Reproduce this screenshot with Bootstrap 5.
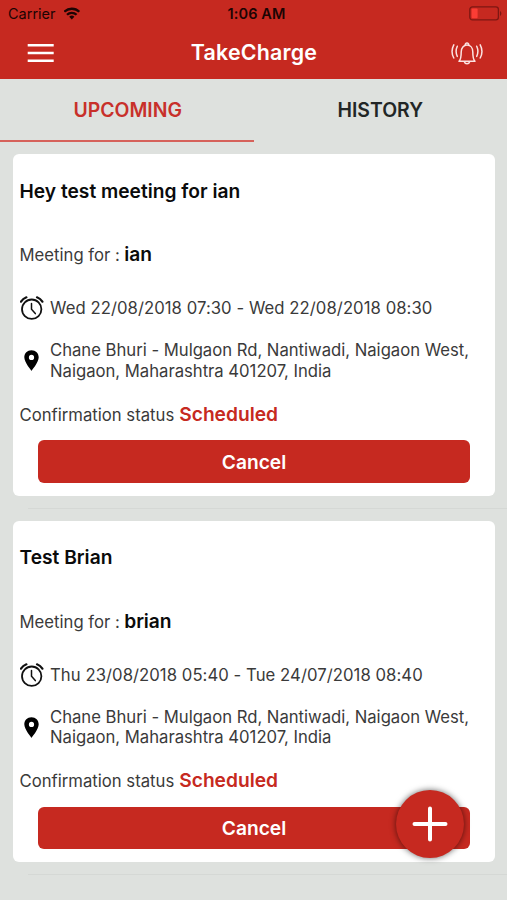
<!DOCTYPE html>
<html lang="en">
<head>
<meta charset="utf-8">
<meta name="viewport" content="width=device-width, initial-scale=1">
<title>TakeCharge</title>
<link href="https://cdn.jsdelivr.net/npm/bootstrap@5.3.0/dist/css/bootstrap.min.css" rel="stylesheet">
<style>
  body { font-family: Inter, "Liberation Sans", sans-serif; background: #dee1de; color: #3a3a3a; height: 900px; }
  svg { display: block; flex: none; }
  .brand-red { background: #c62920; }
  .status-bar { height: 27px; padding: 0 5px 0 8px; font-size: 14.5px; color: #1c0403; }
  .status-bar .side { flex: 1 1 0; }
  .clock { font-weight: 600; font-size: 14.5px; letter-spacing: .1px; white-space: nowrap; padding-left: 3px; }
  .title-bar { height: 52px; padding: 0 23px 1px 27px; }
  .title-bar h1 { font-size: 21.4px; font-weight: 600; letter-spacing: .2px; padding-left: 4px; }
  .tab-link { height: 63px; font-size: 19.4px; font-weight: 600; color: #222626; border-bottom: 2px solid transparent; padding-top: 2px; text-decoration: none; }
  .tab-link.active { color: #c8302a; border-bottom-color: #d6625b; padding-left: 2px; }
  .meeting { height: 341.5px; margin: 0 12px 0 13px; border: 0; border-radius: 6px; padding: 0 7px; font-size: 16.7px; line-height: 20.5px; }
  .meeting h2 { font-size: 19.2px; line-height: 24px; font-weight: 600; color: #0b0b0b; margin: 24.5px 0 0 -.5px; }
  .who { height: 24px; margin: 41.5px 0 0 -.5px; }
  .when { height: 26px; margin-top: 27.3px; letter-spacing: .05px; }
  .where { height: 41px; margin-top: 19.200px; letter-spacing: -.02px; }
  .icon-slot { width: 30px; flex: none; }
  .state { height: 24px; margin: 22.500px 0 0 -.5px; }
  .who b, .state b { margin-left: 5px; font-size: 19.2px; font-weight: 600; color: #0b0b0b; }
  .who b { margin-left: 4.500px; letter-spacing: -.1px; }
  .state b { color: #c62920; }
  .btn-cancel { height: 42.5px; margin: 12.5px 18px 0; border: 0; border-radius: 6px; padding: 1px 0 0; color: #fff; font-size: 19.2px; font-weight: 600; }
  .rule { height: 1px; margin: 12px 0 12px 28px; background: #d5d8d5; }
  .add { width: 68px; height: 68px; right: 42.8px; top: 789.5px; box-shadow: 0 0 6px rgba(0,0,0,.6); border: 0; padding: 0; }
</style>
</head>
<body class="position-relative overflow-hidden">
<header class="brand-red">
  <div class="status-bar d-flex align-items-center">
    <div class="side d-flex align-items-center">
      <span>Carrier</span>
      <svg class="ms-2" width="17" height="13" viewBox="0 0 17 13" fill="none" stroke="#1c0403" stroke-width="2.3"><path d="M.3 4.800a10.700 10.700 0 0 1 15 0M3 7.800a6.800 6.800 0 0 1 9.600 0"/><path d="M5.200 9.700a3.800 3.800 0 0 1 5.200 0L7.800 12.400z" fill="#1c0403" stroke="none"/></svg>
    </div>
    <span class="clock">1:06 AM</span>
    <div class="side d-flex justify-content-end">
      <svg width="33" height="15" viewBox="0 0 33 15"><rect x=".8" y=".9" width="28.6" height="13" rx="2.6" fill="none" stroke="#7e1712" stroke-width="1.3"/><rect x="2.6" y="2.6" width="6" height="9.6" rx="1" fill="#fb3d35"/><path d="M31 5v5c1.8-.8 1.8-4.200 0-5z" fill="#7e1712"/></svg>
    </div>
  </div>
  <nav class="title-bar d-flex align-items-center justify-content-between">
    <svg width="27" height="20" viewBox="0 0 27 20" fill="#fff"><path d="M.7.9h26v2.600h-26zM.7 8.700h26v2.600h-26zM.7 16.500h26v2.600h-26z"/></svg>
    <h1 class="text-white m-0">TakeCharge</h1>
    <svg width="34" height="26" viewBox="0 0 34 26" fill="none" stroke="#fbe3e1" stroke-width="1.5" stroke-linecap="round" stroke-linejoin="round"><path d="M9 21.300h16c-2-1.800-2.200-4-2.200-9.300 0-4.200-2.500-6.900-5.800-6.900s-5.800 2.700-5.800 6.900c0 5.300-.2 7.500-2.200 9.300zM15.300 5.100a1.750 1.750 0 1 1 3.400 0M14.200 21.500a2.900 2.900 0 0 0 5.600 0M7.300 6.300c-1.700 3.600-1.700 6.500 0 10.100M3.800 4.800c-2.400 4.500-2.400 8.700 0 13.200M26.700 6.300c1.700 3.600 1.700 6.500 0 10.100M30.200 4.800c2.400 4.500 2.400 8.700 0 13.200"/></svg>
  </nav>
</header>
<nav class="row g-0 text-center">
  <a class="col-6 tab-link active d-flex align-items-center justify-content-center" href="#">UPCOMING</a>
  <a class="col-6 tab-link d-flex align-items-center justify-content-center" href="#">HISTORY</a>
</nav>
<main class="pt-2 mt-1">
  <article class="card meeting">
    <h2>Hey test meeting for ian</h2>
    <div class="who d-flex align-items-baseline"><span>Meeting for :</span><b>ian</b></div>
    <div class="when d-flex align-items-center"><span class="icon-slot"><svg width="24" height="26" viewBox="0 0 24 26" fill="none" stroke="#111" stroke-width="1.8" stroke-linecap="round"><circle cx="11.700" cy="14.200" r="9.700"/><path d="M1 6.700C2.400 4.500 4 3.200 6.400 2.300M17 2.300c2.400.9 4 2.200 5.400 4.400" stroke-width="2.200"/><path d="M11.500 8.500v5.800l3.800 4.300" stroke-width="1.500"/></svg></span><span>Wed 22/08/2018 07:30 - Wed 22/08/2018 08:30</span></div>
    <div class="where d-flex align-items-center"><span class="icon-slot ps-1"><svg width="16" height="21" viewBox="0 0 16 21"><path fill="#000" fill-rule="evenodd" d="M7.500.2C3.300.2.3 3.300.3 7.300c0 5.100 7.200 13.500 7.200 13.500s7.200-8.400 7.200-13.500c0-4-3-7.100-7.200-7.100zm0 4.600a2.600 2.600 0 1 1 0 5.200 2.600 2.600 0 0 1 0-5.200z"/></svg></span><span class="text-nowrap">Chane Bhuri - Mulgaon Rd, Nantiwadi, Naigaon West,<br>Naigaon, Maharashtra 401207, India</span></div>
    <div class="state d-flex align-items-baseline"><span>Confirmation status</span><b>Scheduled</b></div>
    <button class="btn btn-cancel brand-red">Cancel</button>
  </article>
  <div class="rule"></div>
  <article class="card meeting">
    <h2>Test Brian</h2>
    <div class="who d-flex align-items-baseline"><span>Meeting for :</span><b>brian</b></div>
    <div class="when d-flex align-items-center"><span class="icon-slot"><svg width="24" height="26" viewBox="0 0 24 26" fill="none" stroke="#111" stroke-width="1.8" stroke-linecap="round"><circle cx="11.700" cy="14.200" r="9.700"/><path d="M1 6.700C2.400 4.500 4 3.200 6.400 2.300M17 2.300c2.400.9 4 2.200 5.400 4.400" stroke-width="2.200"/><path d="M11.500 8.500v5.800l3.800 4.300" stroke-width="1.500"/></svg></span><span>Thu 23/08/2018 05:40 - Tue 24/07/2018 08:40</span></div>
    <div class="where d-flex align-items-center"><span class="icon-slot ps-1"><svg width="16" height="21" viewBox="0 0 16 21"><path fill="#000" fill-rule="evenodd" d="M7.500.2C3.300.2.3 3.300.3 7.300c0 5.100 7.200 13.500 7.200 13.500s7.200-8.400 7.200-13.500c0-4-3-7.100-7.200-7.100zm0 4.600a2.600 2.600 0 1 1 0 5.200 2.600 2.600 0 0 1 0-5.200z"/></svg></span><span class="text-nowrap">Chane Bhuri - Mulgaon Rd, Nantiwadi, Naigaon West,<br>Naigaon, Maharashtra 401207, India</span></div>
    <div class="state d-flex align-items-baseline"><span>Confirmation status</span><b>Scheduled</b></div>
    <button class="btn btn-cancel brand-red">Cancel</button>
  </article>
  <div class="rule"></div>
</main>
<button class="add btn brand-red rounded-circle position-absolute d-flex align-items-center justify-content-center" aria-label="Add meeting">
  <svg width="36" height="36" viewBox="0 0 36 36" stroke="#fff" stroke-width="4" stroke-linecap="round"><path d="M18 2.500v31M2.500 18h31"/></svg>
</button>
<script src="https://cdn.jsdelivr.net/npm/bootstrap@5.3.0/dist/js/bootstrap.bundle.min.js"></script>
</body>
</html>
